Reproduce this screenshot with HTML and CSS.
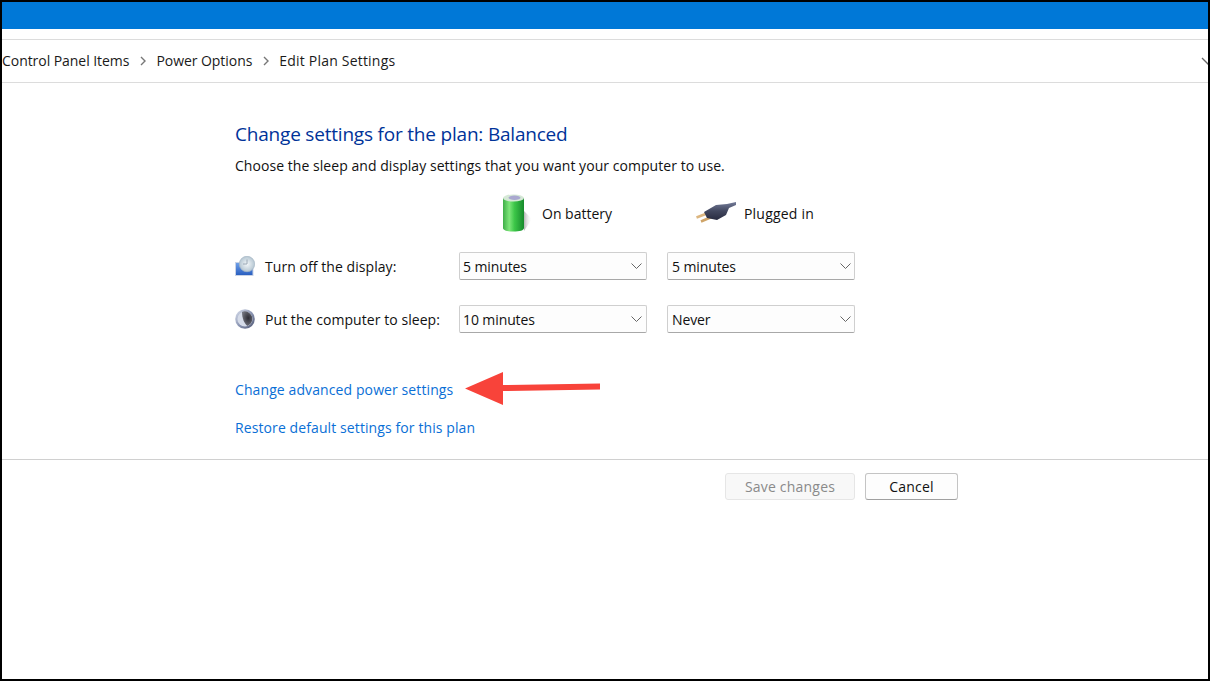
FILE: index.html
```html
<!DOCTYPE html>
<html lang="en">
<head>
<meta charset="utf-8">
<title>Edit Plan Settings</title>
<link rel="stylesheet" href="styles.css">
</head>
<body>
<div class="frame">
  <div class="titlebar"></div>
  <nav class="crumbs">
    <span>Control Panel Items</span>
    <svg class="sep" viewBox="0 0 8 10" width="8" height="10"><path d="M2 1l4 4-4 4" fill="none" stroke="#777" stroke-width="1.4"/></svg>
    <span>Power Options</span>
    <svg class="sep" viewBox="0 0 8 10" width="8" height="10"><path d="M2 1l4 4-4 4" fill="none" stroke="#777" stroke-width="1.4"/></svg>
    <span class="crumb-last">Edit Plan Settings</span>
    <svg class="crumb-drop" viewBox="0 0 14 8" width="14" height="8"><path d="M1 1l6 6 6-6" fill="none" stroke="#666" stroke-width="1.3"/></svg>
  </nav>
  <main class="content">
    <h1 class="title">Change settings for the plan: Balanced</h1>
    <p class="intro">Choose the sleep and display settings that you want your computer to use.</p>
    <div class="grid">
      <div></div>
      <div class="col-head col-battery">
        <svg class="battery" viewBox="0 0 33 40" width="33" height="40">
          <defs>
            <linearGradient id="bat" x1="0" x2="1" y1="0" y2="0">
              <stop offset="0" stop-color="#3fae48"/><stop offset=".3" stop-color="#7ee67a"/><stop offset=".55" stop-color="#3cc648"/><stop offset="1" stop-color="#168a2c"/>
            </linearGradient>
            <linearGradient id="shade" x1="0" x2="1" y1="0" y2="0">
              <stop offset="0" stop-color="#b5b5b5"/><stop offset="1" stop-color="#fff" stop-opacity="0"/>
            </linearGradient>
          </defs>
          <path d="M24 18l8 8-8 12z" fill="url(#shade)"/>
          <path d="M3 5v30c0 2.500 4.500 3.500 10.500 3.500S24 37.500 24 35V5z" fill="url(#bat)"/>
          <ellipse cx="13.500" cy="5" rx="10.500" ry="3.600" fill="#d5e8d6"/>
          <ellipse cx="14.500" cy="4.800" rx="6" ry="2.200" fill="#a9a8cf"/>
        </svg>
        <span>On battery</span>
      </div>
      <div class="col-head col-plug">
        <svg class="plug" viewBox="0 0 42 22" width="42" height="22">
          <defs>
            <linearGradient id="plugbody" x1="0" x2="0" y1="0" y2="1">
              <stop offset="0" stop-color="#737b98"/><stop offset=".5" stop-color="#42475f"/><stop offset="1" stop-color="#282b40"/>
            </linearGradient>
          </defs>
          <path d="M.5 15.500l13-5" fill="none" stroke="#dcb680" stroke-width="2.600"/>
          <path d="M5 19.500l14-6" fill="none" stroke="#cfa468" stroke-width="2.600"/>
          <path d="M8 10L20 3l11-1 9-2v3l-7 3-3 7-9 5-10-2z" fill="url(#plugbody)"/>
        </svg>
        <span class="plug-text">Plugged in</span>
      </div>

      <div class="row-label">
        <svg class="row-icon" viewBox="0 0 20 20" width="20" height="20">
          <defs>
            <linearGradient id="scr" x1="0" x2="0" y1="0" y2="1"><stop offset="0" stop-color="#6d9fe8"/><stop offset="1" stop-color="#2a5fc0"/></linearGradient>
            <radialGradient id="clk"><stop offset="0" stop-color="#f4f8fa"/><stop offset="1" stop-color="#b5c6d2"/></radialGradient>
            <radialGradient id="moon" cx=".6" cy=".45" r=".6"><stop offset="0" stop-color="#2c2c34"/><stop offset="1" stop-color="#70727c"/></radialGradient>
            <linearGradient id="ring" x1="0" x2="1" y1="0" y2="1"><stop offset="0" stop-color="#dfe5f2"/><stop offset=".5" stop-color="#8d97b4"/><stop offset="1" stop-color="#4c5470"/></linearGradient>
          </defs>
          <path d="M0 6h18.500v14H0z" fill="#c9d3e6"/>
          <path d="M1 7h16.500v12H1z" fill="url(#scr)"/>
          <circle cx="12" cy="8" r="7.700" fill="url(#clk)" stroke="#a8b8c6" stroke-width=".7"/>
          <path d="M12 3.500V8H8" fill="none" stroke="#8a99a8" stroke-width=".8"/>
        </svg>
        <span>Turn off the display:</span>
      </div>
      <div class="select select-left"><span>5 minutes</span><svg class="chev" viewBox="0 0 11 6" width="11" height="6"><path d="M.5.500l5 5 5-5" fill="none" stroke="#666" stroke-width="1"/></svg></div>
      <div class="select"><span>5 minutes</span><svg class="chev" viewBox="0 0 11 6" width="11" height="6"><path d="M.5.500l5 5 5-5" fill="none" stroke="#666" stroke-width="1"/></svg></div>

      <div class="row-label">
        <svg class="row-icon" viewBox="0 0 20 20" width="20" height="20">
          <circle cx="10" cy="10" r="9.800" fill="url(#ring)"/>
          <circle cx="10" cy="10" r="7.600" fill="#d5dbe8"/>
          <path d="M7 2.900a7.500 7.500 0 0 1 5.500 14.200C9 14 7 9 7 2.900z" fill="url(#moon)"/>
        </svg>
        <span>Put the computer to sleep:</span>
      </div>
      <div class="select select-left"><span>10 minutes</span><svg class="chev" viewBox="0 0 11 6" width="11" height="6"><path d="M.5.500l5 5 5-5" fill="none" stroke="#666" stroke-width="1"/></svg></div>
      <div class="select"><span>Never</span><svg class="chev" viewBox="0 0 11 6" width="11" height="6"><path d="M.5.500l5 5 5-5" fill="none" stroke="#666" stroke-width="1"/></svg></div>
    </div>
    <a class="link link-first" href="#">Change advanced power settings</a>
    <a class="link link-second" href="#">Restore default settings for this plan</a>
  </main>
  <footer class="actions">
    <button class="btn btn-disabled" disabled>Save changes</button>
    <button class="btn btn-cancel">Cancel</button>
  </footer>
  <svg class="arrow" viewBox="0 0 140 36" width="140" height="36">
    <path d="M0 18.500L38 2v13l97-1.500v6L38 21v14z" fill="#f8433a"/>
  </svg>
</div>
</body>
</html>
```
FILE: styles.css
```css
* { box-sizing: border-box; }
html, body { margin: 0; padding: 0; background: #fff; }
body { font-family: "Open Sans", "Noto Sans", "Liberation Sans", sans-serif; font-size: 14px; color: #111; }
.frame {
  position: relative;
  width: 1210px;
  height: 681px;
  border: 2px solid #000;
  display: flex;
  flex-direction: column;
  overflow: hidden;
}
.titlebar { height: 27px; background: #0078d7; flex: none; }
.crumbs {
  margin-top: 10px;
  height: 44px;
  flex: none;
  border-top: 1px solid #dcdcdc;
  border-bottom: 1px solid #dcdcdc;
  display: flex;
  align-items: center;
  position: relative;
  padding-bottom: 2px;
  letter-spacing: -0.05px;
  color: #1a1a1a;
}
.sep { margin: 2px 9px 0 10px; }
.crumb-last { letter-spacing: 0.2px; }
.crumb-drop { position: absolute; right: -7px; top: 17px; }
.content {
  height: 377px;
  flex: none;
  padding: 38px 0 0 233px;
  border-bottom: 1px solid #d0d0d0;
  display: flex;
  flex-direction: column;
  align-items: flex-start;
}
.title { margin: 0; font-size: 19px; line-height: 26px; font-weight: 400; color: #003399; letter-spacing: -0.2px; }
.intro { margin: 9px 0 0; line-height: 20px; letter-spacing: 0.05px; }
.grid {
  margin-top: 17px;
  display: grid;
  grid-template-columns: 204px 188px 188px;
  grid-template-rows: 40px 47px 53px;
  column-gap: 20px;
}
.col-head { display: flex; align-items: center; }
.col-battery { padding-left: 41px; gap: 9px; }
.col-plug { padding-left: 29px; gap: 6px; }
.plug-text { letter-spacing: 0.2px; }
.row-label { display: flex; align-items: center; gap: 10px; height: 28px; align-self: end; letter-spacing: 0.06px; white-space: nowrap; }
.row-icon { flex: none; }
.select {
  height: 28px;
  align-self: end;
  border: 1px solid #cfcfcf;
  border-bottom-color: #a8a8a8;
  border-radius: 2px;
  background: #fdfdfd;
  display: flex;
  align-items: center;
  justify-content: space-between;
  padding: 0 3px 0 4px;
  letter-spacing: -0.1px;
}
.select-left { padding: 0 4px 0 3px; }
.link { color: #0a6fd6; text-decoration: none; line-height: 20px; letter-spacing: 0.1px; }
.link-first { margin-top: 47px; }
.link-second { margin-top: 18px; }
.actions { display: flex; padding: 13px 0 0 723px; gap: 10px; }
.btn {
  height: 27px;
  border-radius: 3px;
  font: inherit;
  padding: 0;
  letter-spacing: 0.2px;
}
.btn-disabled { width: 130px; background: #f8f8f8; border: 1px solid #e6e6e6; color: #8a8a8a; }
.btn-cancel { width: 93px; background: #fdfdfd; border: 1px solid #c4c4c4; border-bottom-color: #a0a0a0; color: #111; }
.arrow { position: absolute; left: 463px; top: 368px; }
```
